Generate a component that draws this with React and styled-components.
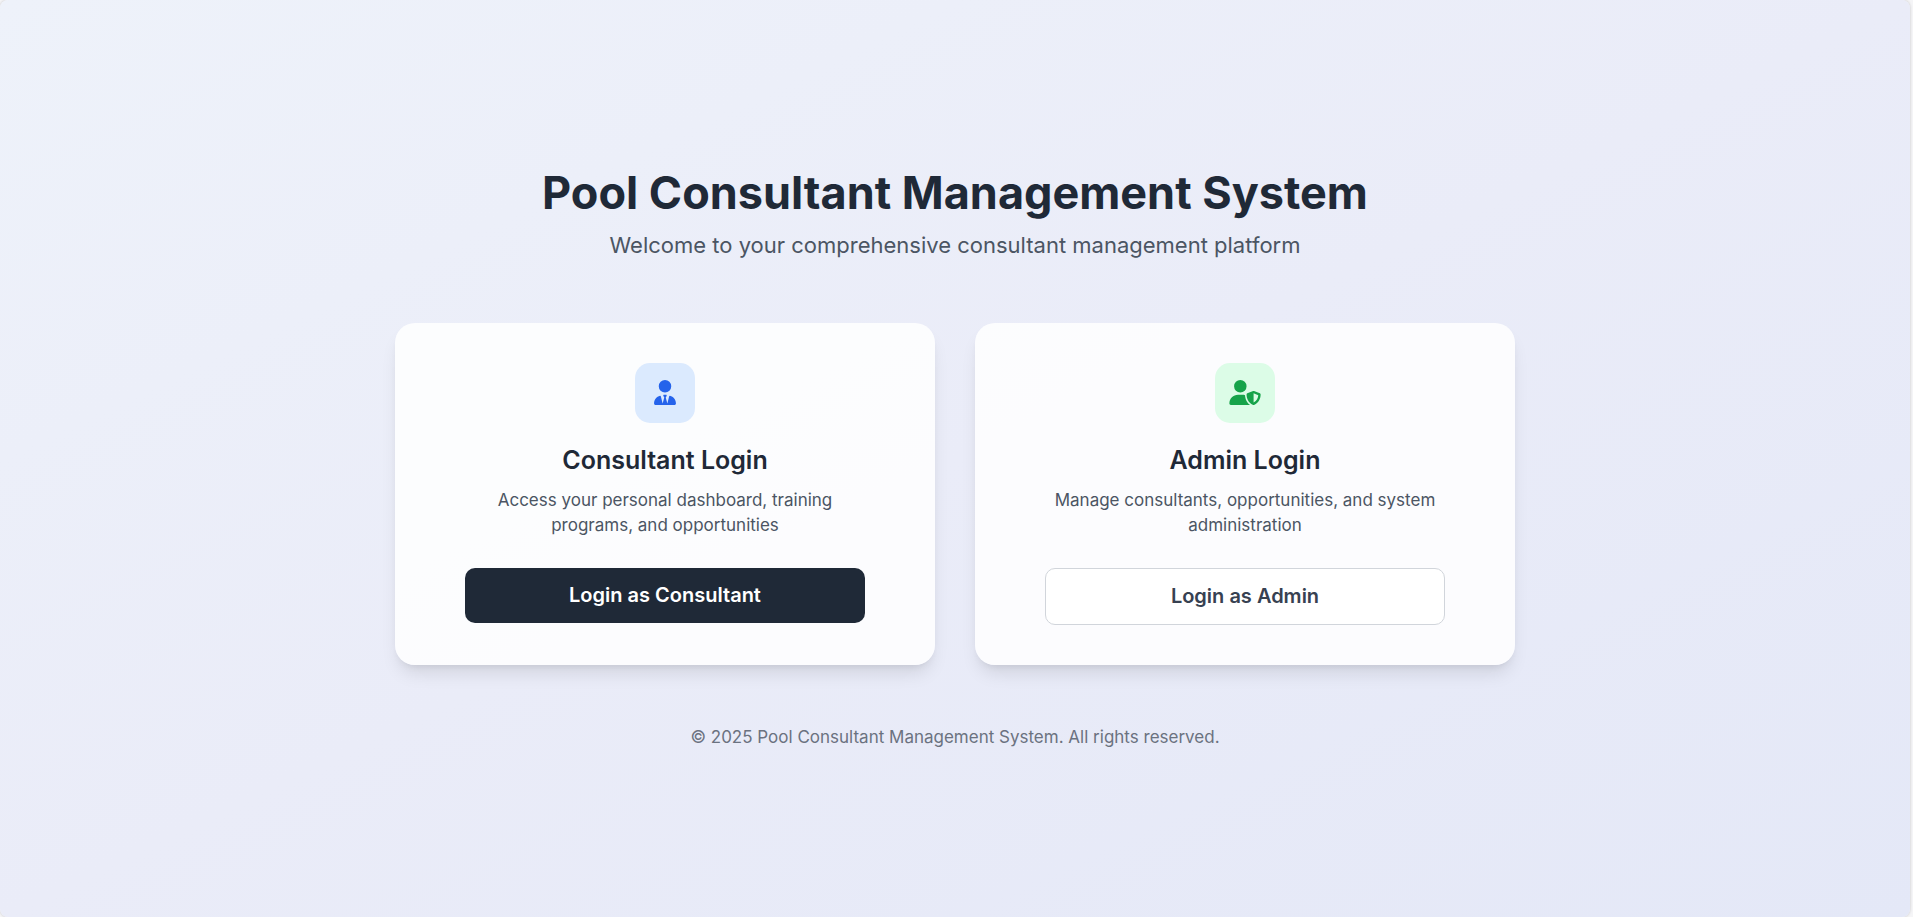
import React from "react";
import styled, { createGlobalStyle } from "styled-components";
import { FaUserTie, FaUserShield } from "react-icons/fa6";

const GlobalStyle = createGlobalStyle`
  *, *::before, *::after { box-sizing: border-box; }
  body {
    margin: 0;
    background: #f5f5f7;
    color: #1f2937;
    font-family: Inter, "Liberation Sans", sans-serif;
  }
  h1, h2, p { margin: 0; }
`;

const Page = styled.div`
  min-height: 100vh;
  margin-right: 3px;
  display: flex;
  align-items: center;
  justify-content: center;
  padding: 32px 16px;
  border-radius: 8px;
  background: linear-gradient(to bottom right, #eef2fa 0%, #eaecf8 50%, #e4e8f7 100%);
  box-shadow: 0 0 3px rgba(0, 0, 0, 0.2);
`;

const Content = styled.div`
  width: 100%;
  max-width: 1120px;
`;

const Header = styled.header`
  text-align: center;
  margin-bottom: 60px;
`;

const Title = styled.h1`
  font-size: 45px;
  line-height: 50px;
  font-weight: 700;
`;

const Tagline = styled.p`
  margin-top: 10px;
  font-size: 22px;
  line-height: 35px;
  color: #4b5563;
`;

const Cards = styled.main`
  display: grid;
  grid-template-columns: repeat(auto-fit, minmax(320px, 1fr));
  gap: 40px;
`;

const Card = styled.section`
  display: flex;
  flex-direction: column;
  align-items: center;
  padding: 40px;
  border-radius: 20px;
  background: rgba(255, 255, 255, 0.85);
  box-shadow: 0 12px 18px -4px rgba(0, 0, 0, 0.1), 0 5px 8px -5px rgba(0, 0, 0, 0.1);
  text-align: center;
`;

const IconTile = styled.div`
  display: flex;
  align-items: center;
  justify-content: center;
  width: 60px;
  height: 60px;
  border-radius: 15px;
  color: ${(p) => (p.$tone === "green" ? "#16a34a" : "#2563eb")};
  background: ${(p) => (p.$tone === "green" ? "#dcfce7" : "#dbeafe")};

  svg {
    width: 32px;
    height: 25px;
  }
`;

const CardTitle = styled.h2`
  margin-top: 20px;
  font-size: 25px;
  line-height: 35px;
  font-weight: 600;
`;

const CardText = styled.p`
  max-width: 400px;
  margin-top: 10px;
  font-size: 17px;
  line-height: 25px;
  color: #4b5563;
`;

const LoginButton = styled.button`
  width: 100%;
  max-width: 400px;
  margin-top: 30px;
  padding: 15px 20px;
  border: ${(p) => (p.$outline ? "1px solid #d1d5db" : "0")};
  border-radius: 10px;
  font: 600 20px/25px Inter, "Liberation Sans", sans-serif;
  color: ${(p) => (p.$outline ? "#374151" : "#ffffff")};
  background: ${(p) => (p.$outline ? "#ffffff" : "#1f2937")};
  cursor: pointer;
`;

const Footer = styled.footer`
  margin-top: 60px;
  text-align: center;
  font-size: 17px;
  line-height: 25px;
  color: #6b7280;
`;

const logins = [
  {
    title: "Consultant Login",
    text: "Access your personal dashboard, training programs, and opportunities",
    action: "Login as Consultant",
    tone: "blue",
    Icon: FaUserTie,
  },
  {
    title: "Admin Login",
    text: "Manage consultants, opportunities, and system administration",
    action: "Login as Admin",
    tone: "green",
    outline: true,
    Icon: FaUserShield,
  },
];

export default function App() {
  return (
    <>
      <GlobalStyle />
      <Page>
        <Content>
          <Header>
            <Title>Pool Consultant Management System</Title>
            <Tagline>Welcome to your comprehensive consultant management platform</Tagline>
          </Header>
          <Cards>
            {logins.map(({ title, text, action, tone, outline, Icon }) => (
              <Card key={title}>
                <IconTile $tone={tone}>
                  <Icon aria-hidden="true" />
                </IconTile>
                <CardTitle>{title}</CardTitle>
                <CardText>{text}</CardText>
                <LoginButton type="button" $outline={outline}>{action}</LoginButton>
              </Card>
            ))}
          </Cards>
          <Footer>© 2025 Pool Consultant Management System. All rights reserved.</Footer>
        </Content>
      </Page>
    </>
  );
}
